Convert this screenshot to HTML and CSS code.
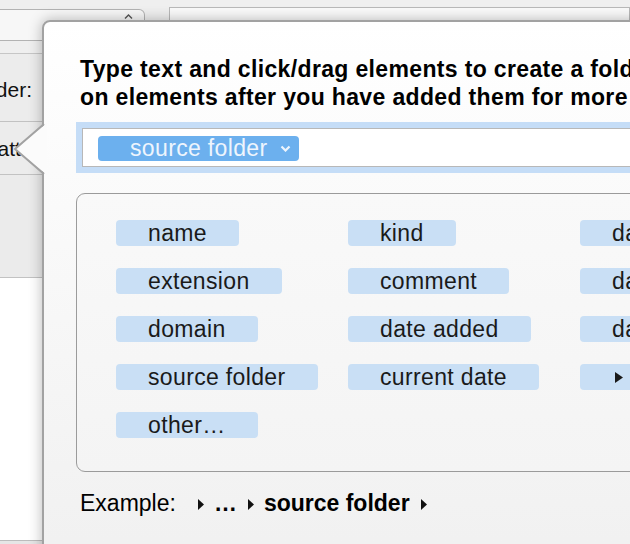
FILE: index.html
```html
<!DOCTYPE html>
<html>
<head>
<meta charset="utf-8">
<link rel="stylesheet" href="styles.css">
</head>
<body>
<div class="bg">
  <div class="bg-head">
    <div class="popup"><svg class="popup-chev" width="9" height="5" viewBox="0 0 9 5"><polyline points="1,4.5 4.5,1 8,4.5" fill="none" stroke="#555" stroke-width="1.4"/></svg></div>
    <div class="tfield"></div>
  </div>
  <div class="bg-row r1"><div class="lab lab1"><span>Source folder:</span></div></div>
  <div class="bg-row r2"><div class="lab lab2"><span>Pattern:</span></div></div>
  <div class="bg-row r3"></div>
  <div class="bg-row r4"></div>
</div>

<div class="pop">
  <svg class="arrow" width="34" height="52" viewBox="0 0 34 52">
    <polygon points="34,0 2,26 34,52" fill="#fbfbfb"/>
    <polyline points="31,1 2,26 31,51" fill="none" stroke="#a2a2a2" stroke-width="2"/>
  </svg>
  <div class="pop-inner">
    <div class="title">Type text and click/drag elements to create a folder name. Click<br>on elements after you have added them for more options.</div>
    <div class="ring">
      <div class="field">
        <span class="ftoken">source folder<svg class="fchev" width="11" height="7" viewBox="0 0 11 7"><polyline points="1.5,1.5 5.5,5.5 9.5,1.5" fill="none" stroke="#eef5fd" stroke-width="2.2"/></svg></span>
      </div>
    </div>
    <div class="tokbox">
      <span class="tok">name</span>
      <span class="tok">kind</span>
      <span class="tok">date created</span>
      <span class="tok">extension</span>
      <span class="tok">comment</span>
      <span class="tok">date modified</span>
      <span class="tok">domain</span>
      <span class="tok">date added</span>
      <span class="tok">date last opened</span>
      <span class="tok">source folder</span>
      <span class="tok">current date</span>
      <span class="tok tok-sep"><svg width="8" height="11" viewBox="0 0 8 11"><polygon points="0,0 8,5.5 0,11" fill="#1a1a1a"/></svg></span>
      <span class="tok">other…</span>
    </div>
    <div class="example">Example:<svg class="tri tri-first" width="6" height="11" viewBox="0 0 6 11"><polygon points="0,0 6,5.5 0,11" fill="#111"/></svg><b>…</b><svg class="tri" width="6" height="11" viewBox="0 0 6 11"><polygon points="0,0 6,5.5 0,11" fill="#111"/></svg><b>source folder</b><svg class="tri" width="6" height="11" viewBox="0 0 6 11"><polygon points="0,0 6,5.5 0,11" fill="#111"/></svg></div>
  </div>
</div>
</body>
</html>
```

FILE: styles.css
```css
html, body {
  margin: 0;
  padding: 0;
  width: 630px;
  height: 544px;
  overflow: hidden;
}
body {
  position: relative;
  background: #e6e6e6;
  font-family: "Liberation Sans", Arial, sans-serif;
  color: #111;
}
.bg {
  display: flex;
  flex-direction: column;
  width: 630px;
}
.bg-head {
  display: flex;
  height: 54px;
  box-sizing: border-box;
  background: #efefef;
  border-bottom: 1px solid #c6c6c6;
}
.popup {
  position: relative;
  width: 145px;
  height: 32px;
  margin-top: 9px;
  box-sizing: border-box;
  border: 1px solid #b3b3b3;
  border-left: none;
  border-radius: 0 6px 6px 0;
  background: #f7f7f7;
}
.popup-chev {
  position: absolute;
  left: 124px;
  top: 4px;
}
.tfield {
  flex: 1;
  margin-left: 24px;
  margin-top: 7px;
  height: 30px;
  box-sizing: border-box;
  border: 1px solid #b8b8b8;
  background: #fafafa;
}
.bg-row {
  box-sizing: border-box;
  border-bottom: 1px solid #c2c2c2;
}
.r1 { height: 68px; background: #ececec; }
.r2 { height: 53px; background: #ececec; }
.r3 { height: 103px; background: #ebebeb; }
.r4 { height: 263px; background: #ffffff; border-bottom-color: #bcbcbc; }
.lab {
  display: flex;
  justify-content: flex-end;
  overflow: hidden;
  white-space: nowrap;
  font-size: 21px;
  line-height: 24px;
}
.lab1 { width: 32px; padding-top: 24px; }
.lab2 { width: 57px; padding-top: 15px; }

.pop {
  position: absolute;
  left: 42px;
  top: 20px;
  width: 720px;
  height: 560px;
  box-sizing: border-box;
  border: 2px solid #a2a2a2;
  border-radius: 8px;
  background: linear-gradient(#ffffff, #f0f0f0);
  box-shadow: 0 0 14px rgba(0, 0, 0, 0.28);
}
.arrow {
  position: absolute;
  left: -31px;
  top: 101px;
}
.pop-inner {
  padding: 33px 0 0 32px;
  letter-spacing: 0.35px;
}
.title {
  padding-left: 4px;
  font-weight: bold;
  font-size: 23px;
  line-height: 28px;
  white-space: nowrap;
  color: #000;
}
.ring {
  margin-top: 11px;
  width: 640px;
  padding: 6px;
  background: #c5ddf7;
}
.field {
  display: flex;
  align-items: flex-start;
  height: 39px;
  box-sizing: border-box;
  border: 1px solid #b8b8b8;
  background: #fff;
  padding: 7px 0 0 15px;
}
.ftoken {
  display: inline-flex;
  align-items: center;
  height: 25px;
  line-height: 25px;
  padding-left: 32px;
  border-radius: 4px;
  background: #6cb0ee;
  color: #eef5fd;
  font-size: 23px;
  white-space: nowrap;
}
.fchev {
  margin-left: 12px;
  margin-right: 8px;
}
.tokbox {
  margin-top: 20px;
  width: 700px;
  box-sizing: border-box;
  border: 1px solid #9b9b9b;
  border-radius: 9px;
  padding: 26px 0 33px 39px;
  display: grid;
  grid-template-columns: 232px 232px 232px;
  row-gap: 22px;
  justify-items: start;
  background: linear-gradient(#f9f9f9, #f4f4f4);
}
.tok {
  display: inline-flex;
  align-items: center;
  height: 26px;
  line-height: 27px;
  padding: 0 32px;
  border-radius: 4px;
  background: #c9dff5;
  color: #1a1a1a;
  font-size: 23px;
  white-space: nowrap;
}
.tok-sep svg {
  margin-left: 3px;
  margin-right: 20px;
}
.example {
  margin-top: 17px;
  padding-left: 4px;
  font-size: 23px;
  line-height: 28px;
  white-space: nowrap;
  color: #000;
  letter-spacing: 0;
}
.example b {
  font-weight: bold;
}
.tri {
  vertical-align: 1px;
  margin: 0 10px 0 11px;
}
.tri-first {
  margin-left: 22px;
}
```
